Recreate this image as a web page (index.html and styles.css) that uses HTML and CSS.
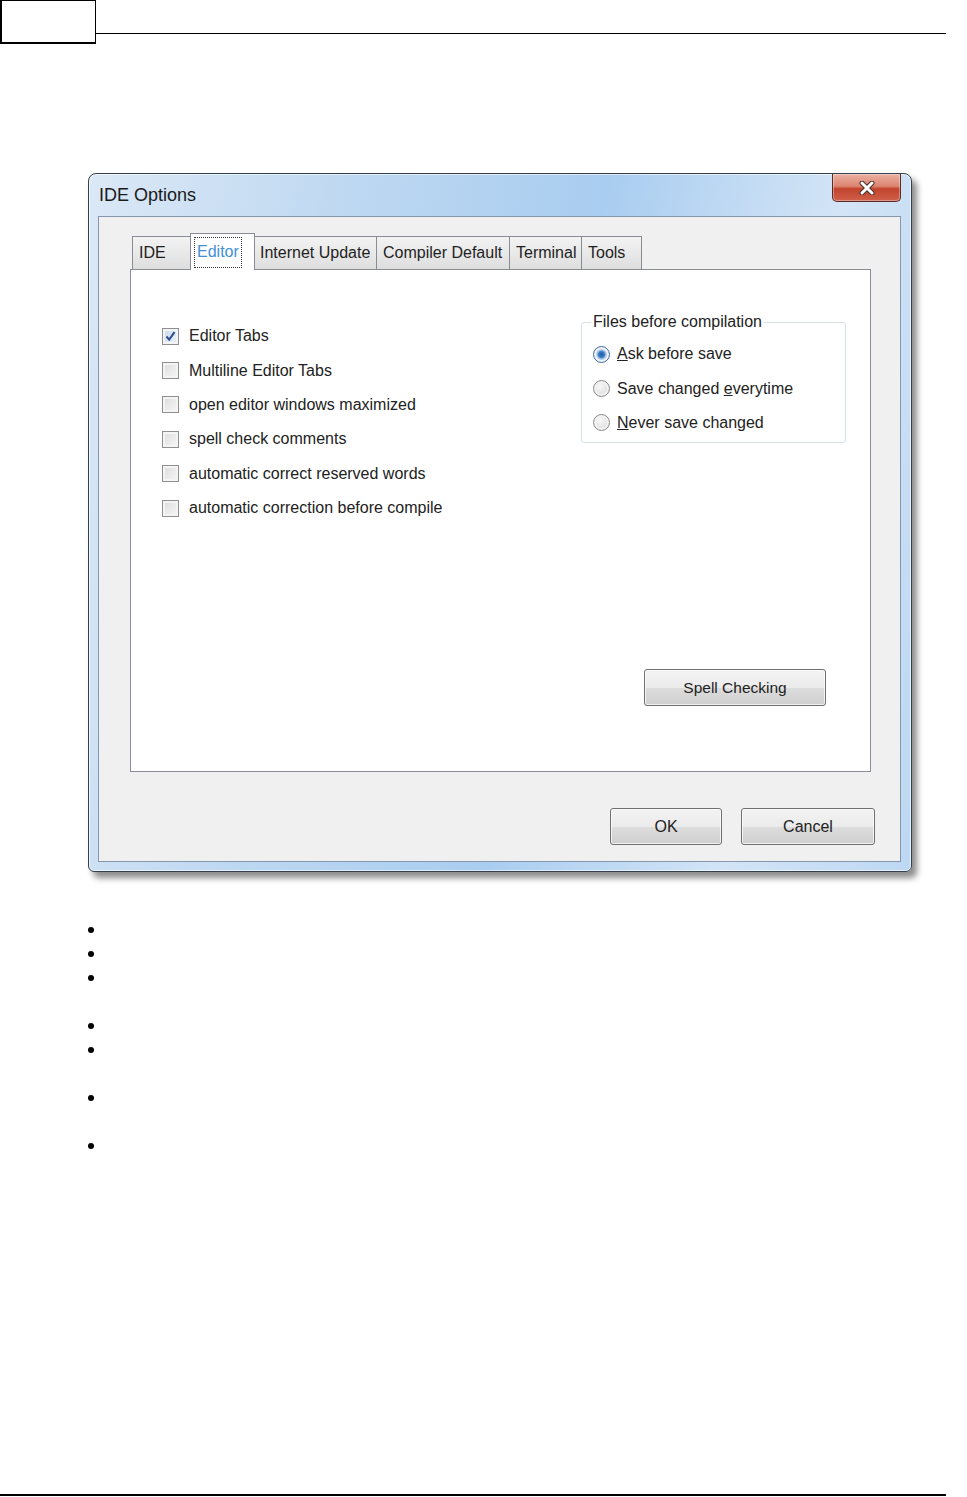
FILE: index.html
```html
<!DOCTYPE html>
<html lang="en">
<head>
    <meta charset="UTF-8">
    <meta name="viewport" content="width=device-width, initial-scale=1.0">
    <title>IDE Options</title>
    <link rel="stylesheet" href="styles.css">
</head>
<body>
    <div class="sheet">
        <div class="page-head">
            <div class="page-box"></div>
            <div class="page-rule"></div>
        </div>

        <!-- dialog -->
        <div class="window">
            <div class="titlebar">
                <span class="title">IDE Options</span>
                <button class="close-btn" title="Close">
                    <svg width="18" height="14" viewBox="0 0 18 14">
                        <path d="M4 2 L14 12 M14 2 L4 12" stroke="#4a2a26" stroke-width="5" stroke-linecap="round"/>
                        <path d="M4 2 L14 12 M14 2 L4 12" stroke="#fff" stroke-width="3" stroke-linecap="round"/>
                    </svg>
                </button>
            </div>

            <div class="client">
                <div class="tabs">
                    <div class="tab tab-ide">IDE</div>
                    <div class="tab tab-editor active"><span class="focus">Editor</span></div>
                    <div class="tab tab-update">Internet Update</div>
                    <div class="tab tab-compiler">Compiler Default</div>
                    <div class="tab tab-terminal">Terminal</div>
                    <div class="tab tab-tools">Tools</div>
                </div>

                <div class="tab-page">
                    <div class="page-top">
                        <div class="checks">
                            <label class="check"><span class="box checked">
                                <svg width="11" height="11" viewBox="0 0 11 11"><path d="M1.5 5.5 L4.2 8.6 L9.5 1.2" fill="none" stroke="#2a4d8f" stroke-width="2"/></svg>
                            </span><span>Editor Tabs</span></label>
                            <label class="check"><span class="box"></span><span>Multiline Editor Tabs</span></label>
                            <label class="check"><span class="box"></span><span>open editor windows maximized</span></label>
                            <label class="check"><span class="box"></span><span>spell check comments</span></label>
                            <label class="check"><span class="box"></span><span>automatic correct reserved words</span></label>
                            <label class="check"><span class="box"></span><span>automatic correction before compile</span></label>
                        </div>

                        <fieldset class="group">
                            <legend>Files before compilation</legend>
                            <label class="radio"><span class="dot selected"></span><span><u>A</u>sk before save</span></label>
                            <label class="radio"><span class="dot"></span><span>Save changed <u>e</u>verytime</span></label>
                            <label class="radio"><span class="dot"></span><span><u>N</u>ever save changed</span></label>
                        </fieldset>
                    </div>

                    <button class="btn btn-spell">Spell Checking</button>
                </div>

                <div class="actions">
                    <button class="btn btn-ok">OK</button>
                    <button class="btn btn-cancel">Cancel</button>
                </div>
            </div>
        </div>

        <ul class="notes">
            <li></li>
            <li></li>
            <li></li>
            <li class="spaced"></li>
            <li></li>
            <li class="spaced"></li>
            <li class="spaced"></li>
        </ul>

        <div class="page-foot"></div>
    </div>
</body>
</html>
```

FILE: styles.css
```css
* {
    margin: 0;
    padding: 0;
    box-sizing: border-box;
}
body {
    background: #fff;
    color: #1e1e1e;
    font-family: "Liberation Sans", Arial, sans-serif;
    font-size: 16px;
}
.sheet {
    width: 967px;
    height: 1497px;
    display: flex;
    flex-direction: column;
}

/* page header */
.page-head {
    display: flex;
    align-items: flex-start;
}
.page-box {
    width: 96px;
    height: 44px;
    border: 1px solid #000;
    border-left-width: 2px;
    border-bottom-width: 2px;
}
.page-rule {
    width: 850px;
    margin-top: 33px;
    border-top: 1px solid #000;
}

/* window frame */
.window {
    width: 824px;
    height: 699px;
    margin: 129px 0 0 88px;
    padding: 0 10px 9px 9px;
    border: 1px solid #34404e;
    border-radius: 8px 8px 6px 6px;
    background: linear-gradient(100deg, #dbe8f6 0%, #bcd7f1 30%, #a9cdf0 55%, #d3e4f6 80%, #bdd8f3 100%);
    box-shadow: inset 0 0 0 1px rgba(255, 255, 255, 0.6), 5px 6px 6px rgba(0, 0, 0, 0.45);
    display: flex;
    flex-direction: column;
}
.titlebar {
    height: 42px;
    display: flex;
    align-items: center;
    justify-content: space-between;
}
.title {
    padding-left: 1px;
    font-size: 18px;
    color: #1a1a1a;
}
.close-btn {
    align-self: flex-start;
    width: 69px;
    height: 28px;
    border: 1px solid #5b2a24;
    border-top: none;
    border-radius: 0 0 5px 5px;
    background: linear-gradient(#eab0a2 0%, #dc8570 45%, #c2432c 55%, #d0604a 100%);
    box-shadow: inset 0 0 0 1px rgba(255, 255, 255, 0.35);
    display: flex;
    align-items: center;
    justify-content: center;
}

/* client area */
.client {
    flex: 1;
    background: #f0f0f0;
    border: 1px solid #8497ac;
    padding: 16px 29px 0 31px;
    display: flex;
    flex-direction: column;
}
.tabs {
    display: flex;
    align-items: flex-end;
    height: 36px;
    padding-left: 2px;
}
.tab {
    height: 33px;
    padding-left: 6px;
    border: 1px solid #898c95;
    border-bottom: none;
    background: linear-gradient(#f3f3f3, #dedede);
    display: flex;
    align-items: center;
    font-size: 16px;
    color: #1e1e1e;
    margin-left: -1px;
}
.tab-ide { width: 59px; margin-left: 0; }
.tab-editor { width: 65px; }
.tab-update { width: 123px; padding-left: 5px; }
.tab-compiler { width: 134px; }
.tab-terminal { width: 73px; }
.tab-tools { width: 61px; }
.tab.active {
    height: 37px;
    margin-bottom: -1px;
    padding-left: 4px;
    background: #fff;
    color: #3f8fd8;
    position: relative;
    z-index: 1;
}
.focus {
    outline: 1px dotted #333;
    padding: 5px 2px 6px 2px;
}

.tab-page {
    height: 503px;
    border: 1px solid #898c95;
    background: #fff;
    display: flex;
    flex-direction: column;
}
.page-top {
    display: flex;
    justify-content: space-between;
    align-items: flex-start;
    padding: 43px 24px 0 31px;
}
.checks {
    margin-top: 6px;
}
.check, .radio {
    display: flex;
    align-items: center;
    height: 34.4px;
    color: #222;
}
.box {
    width: 17px;
    height: 17px;
    margin-right: 10px;
    border: 1px solid #8e8f8f;
    background: linear-gradient(135deg, #dcdcdc, #f7f7f7);
    box-shadow: inset 0 0 0 2px #f4f4f4;
    display: flex;
    align-items: center;
    justify-content: center;
}
.box.checked {
    background: linear-gradient(135deg, #cbd8ea, #eef3fa);
}

.group {
    width: 265px;
    border: 1px solid #d5dfe5;
    border-radius: 3px;
    padding: 0 6px 2px 11px;
}
.group legend {
    padding: 0 2px;
    margin-left: -2px;
    line-height: 18px;
    color: #222;
}
.group .radio:first-of-type {
    margin-top: 6px;
}
.dot {
    width: 17px;
    height: 17px;
    margin-right: 7px;
    border-radius: 50%;
    border: 1px solid #8a8a8a;
    background: radial-gradient(circle at 40% 35%, #f8f8f8, #d4d4d4);
    box-shadow: inset 0 0 0 2px #f2f2f2;
}
.dot.selected {
    background: radial-gradient(circle, #1f5fa8 0, #3a7cc4 3px, #8fb7e2 4px, #dbe7f4 6px);
    border-color: #3d6ea6;
}

.btn {
    border: 1px solid #707070;
    border-radius: 3px;
    background: linear-gradient(#f3f3f3 0%, #ebebeb 50%, #dddddd 51%, #cfcfcf 100%);
    box-shadow: inset 0 0 0 1px rgba(255, 255, 255, 0.7);
    font-family: "Liberation Sans", Arial, sans-serif;
    font-size: 16px;
    color: #222;
    height: 37px;
}
.btn-spell {
    width: 182px;
    font-size: 15.5px;
    align-self: flex-end;
    margin: auto 44px 65px 0;
}
.actions {
    display: flex;
    justify-content: flex-end;
    gap: 19px;
    margin: 36px -4px 0 0;
}
.btn-ok { width: 112px; }
.btn-cancel { width: 134px; }

/* bullets below the screenshot */
.notes {
    list-style: none;
    margin-top: 46px;
}
.notes li {
    height: 24px;
    display: flex;
    align-items: center;
}
.notes li::before {
    content: "";
    width: 6px;
    height: 6px;
    margin-left: 88px;
    border-radius: 50%;
    background: #000;
}
.notes li.spaced {
    margin-top: 24px;
}

.page-foot {
    margin-top: auto;
    margin-bottom: 1px;
    width: 946px;
    border-top: 2px solid #000;
}
```
